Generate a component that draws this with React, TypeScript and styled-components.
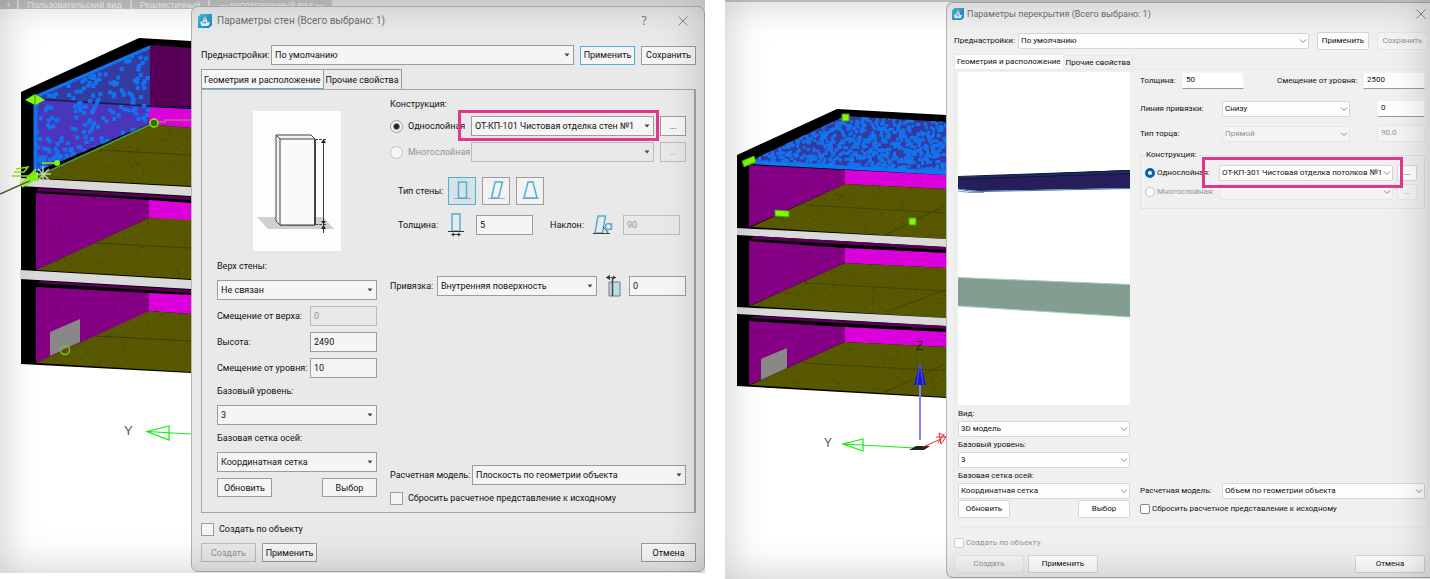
import React from 'react';
import styled, { createGlobalStyle, css, ThemeProvider } from 'styled-components';

interface Skin {
  fluent: boolean;
  surface: string;
  field: string;
  line: string;
  text: number;
  title: number;
  control: number;
}

declare module 'styled-components' {
  export interface DefaultTheme extends Skin {}
}

const classic: Skin = {
  fluent: false, surface: '#e9e9e9', field: '#f5f5f5', line: '#9c9c9c', text: 9, title: 10, control: 20,
};
const fluent: Skin = {
  fluent: true, surface: '#f0f0f0', field: '#fefefe', line: '#d6d6d6', text: 8, title: 9, control: 16,
};

const ACCENT = '#4fb0d4';
const MARK = '#e0368c';

const GlobalStyle = createGlobalStyle`
  * { box-sizing: border-box; }
  body {
    margin: 0;
    background: #fff;
    color: #111;
    font-family: Roboto, "Noto Sans", sans-serif;
  }
  button, input, select { font: inherit; color: inherit; margin: 0; }
`;

/* ---------- page ---------- */

const Page = styled.main`
  display: flex;
  align-items: flex-start;
  gap: 20px;
`;

const Pane = styled.section`
  position: relative;
  flex: 1 1 0;
  min-width: 0;
  overflow: hidden;
  background: #fff;
  &::after {
    content: '';
    position: absolute;
    inset: 0;
    pointer-events: none;
    box-shadow: inset 0 0 40px rgba(0, 0, 0, 0.22);
  }
`;

const ViewTabs = styled.nav`
  display: flex;
  gap: 2px;
  height: 9px;
  overflow: hidden;
  background: #e2e2e2;
`;

const ViewTab = styled.button`
  flex: none;
  height: 9px;
  padding: 0 8px;
  &:first-child { padding: 0 6px; }
  border: 0;
  background: #c4c4c4;
  color: #f4f4f4;
  font-family: "Liberation Sans", sans-serif;
  font-size: 9px;
  line-height: 4px;
  white-space: nowrap;
`;

const TopEdge = styled.div`
  height: 2px;
  background: #cfcfcf;
`;

const Stage = styled.div<{ $lift?: boolean }>`
  display: flex;
  align-items: flex-start;
  ${(p) => p.$lift && css`margin-top: -3px;`}
`;

const Scene = styled.svg`
  display: block;
  flex: none;
  shape-rendering: geometricPrecision;
`;

/* ---------- dialog ---------- */

const Dialog = styled.form`
  position: relative;
  flex: 1;
  min-width: 0;
  display: flex;
  flex-direction: column;
  padding: ${(p) => (p.theme.fluent ? '0 2px 4px 7px' : '0 8px 9px 9px')};
  border: 1px solid #b4b4b4;
  border-radius: 7px;
  ${(p) => p.theme.fluent && css`
    border-right: 0;
    border-radius: 7px 0 0 7px;
  `}
  background: ${(p) => p.theme.surface};
  font-size: ${(p) => p.theme.text}px;
  line-height: 14px;
`;

const TitleBar = styled.header`
  display: flex;
  align-items: center;
  gap: ${(p) => (p.theme.fluent ? 3 : 5)}px;
  height: ${(p) => (p.theme.fluent ? 22 : 27)}px;
  margin: ${(p) => (p.theme.fluent ? '0 0 7px -2px' : '0 0 11px -3px')};
  color: #6f6f6f;
`;

const Title = styled.h1`
  flex: 1;
  margin: 0;
  font-size: ${(p) => p.theme.title}px;
  font-weight: 400;
  white-space: nowrap;
`;

const TitleButton = styled.button`
  display: flex;
  align-items: center;
  justify-content: center;
  width: ${(p) => (p.theme.fluent ? 14 : 26)}px;
  height: 20px;
  margin-left: ${(p) => (p.theme.fluent ? 0 : 8)}px;
  padding: 0;
  border: 0;
  background: none;
  color: #777;
  font-family: "Noto Sans", sans-serif;
  font-size: 12px;
`;

const Row = styled.div<{ $gap?: number; $indent?: number; $between?: boolean }>`
  display: flex;
  align-items: center;
  gap: ${(p) => p.$gap ?? 6}px;
  padding-left: ${(p) => p.$indent ?? 0}px;
  ${(p) => p.$between && css`justify-content: space-between;`}
`;

const Label = styled.label<{ $w?: number }>`
  flex: none;
  display: flex;
  align-items: center;
  gap: ${(p) => (p.theme.fluent ? 2 : 5)}px;
  ${(p) => p.$w && css`width: ${p.$w}px;`}
  white-space: nowrap;
`;

const Muted = styled.span`
  color: #929292;
`;

const Push = styled.span`
  flex: 1;
`;

const box = css`
  height: ${(p) => p.theme.control}px;
  border: 1px solid ${(p) => p.theme.line};
  border-radius: ${(p) => (p.theme.fluent ? 2 : 0)}px;
  background: ${(p) => p.theme.field};
  &:disabled {
    border-color: ${(p) => (p.theme.fluent ? '#e6e6e6' : '#bcbcbc')};
    background: ${(p) => (p.theme.fluent ? '#f4f4f4' : '#e8e8e8')};
    color: #929292;
    opacity: 1;
  }
`;

const Button = styled.button<{ $w: number; $primary?: boolean }>`
  ${box}
  flex: none;
  width: ${(p) => p.$w}px;
  height: ${(p) => (p.theme.fluent ? 18 : 19)}px;
  padding: 0;
  line-height: 14px;
  white-space: nowrap;
  ${(p) => p.$primary && css`border-color: ${ACCENT};`}
`;

const MoreButton = styled(Button)`
  height: ${(p) => p.theme.control}px;
`;

const TextField = styled.input<{ $w: number }>`
  ${box}
  flex: none;
  width: ${(p) => p.$w}px;
  padding: 0 3px;
  ${(p) => p.theme.fluent && css`
    height: 17px;
    padding-bottom: 2px;
    border-color: #f2f2f2;
    border-radius: 1px;
    &:enabled { border-bottom-color: #9a9a9a; }
  `}
`;

const SelectBox = styled.span<{ $w?: number }>`
  position: relative;
  display: block;
  min-width: 0;
  flex: ${(p) => (p.$w ? `0 0 ${p.$w}px` : '1 1 auto')};
  select {
    ${box}
    display: block;
    width: 100%;
    padding: 0 ${(p) => (p.theme.fluent ? 9 : 14)}px 0 ${(p) => (p.theme.fluent ? 2 : 3)}px;
    appearance: none;
  }
  > svg {
    position: absolute;
    right: ${(p) => (p.theme.fluent ? 2 : 4)}px;
    top: 50%;
    transform: translateY(-50%);
    pointer-events: none;
  }
`;

const Marker = styled.span`
  position: absolute;
  z-index: 1;
  inset: ${(p) => (p.theme.fluent ? '-8px -10px -7px -17px' : '-6px -5px -5px -13px')};
  border: 3px solid ${MARK};
  pointer-events: none;
`;

const Check = styled.input.attrs({ type: 'checkbox' })`
  flex: none;
  appearance: none;
  width: ${(p) => (p.theme.fluent ? 10 : 13)}px;
  height: ${(p) => (p.theme.fluent ? 10 : 13)}px;
  border: 1px solid ${(p) => (p.theme.fluent ? '#858585' : '#9c9c9c')};
  border-radius: ${(p) => (p.theme.fluent ? 2 : 0)}px;
  background: ${(p) => p.theme.field};
  &:disabled { border-color: #cfcfcf; }
`;

const Radio = styled.input.attrs({ type: 'radio' })`
  flex: none;
  appearance: none;
  width: ${(p) => (p.theme.fluent ? 10 : 13)}px;
  height: ${(p) => (p.theme.fluent ? 10 : 13)}px;
  border: 1px solid #9c9c9c;
  border-radius: 50%;
  background: ${(p) => p.theme.field};
  &:disabled { border-color: #c2c2c2; }
  &:checked {
    ${(p) => p.theme.fluent
      ? css`border: 3px solid #0560b6;`
      : css`background: radial-gradient(circle, #222 0 2px, #f5f5f5 4px);`}
  }
`;

const Tabs = styled.div`
  display: flex;
  align-items: flex-end;
  margin-top: 4px;
`;

const Tab = styled.button<{ $active?: boolean }>`
  height: ${(p) => (p.theme.fluent ? 14 : 20)}px;
  padding: 0 2px;
  border: 1px solid ${(p) => (p.theme.fluent ? '#e9e9e9' : '#9c9c9c')};
  border-bottom: 0;
  background: ${(p) => p.theme.surface};
  line-height: 14px;
  & + & { border-left: 0; }
  ${(p) => p.$active && css`
    background: ${p.theme.field};
    ${p.theme.fluent ? css`height: 15px;` : css`box-shadow: inset 0 -1px ${ACCENT};`}
  `}
`;

const Panel = styled.div`
  display: flex;
  border: 1px solid ${(p) => (p.theme.fluent ? '#e9e9e9' : '#a6a6a6')};
  ${(p) => p.theme.fluent
    ? css`gap: 10px; padding: 2px 2px 9px 3px;`
    : css`gap: 13px; padding: 0 8px 0 15px; border-width: 1px 2px 1px 1px;`}
`;

const SideColumn = styled.div`
  flex: none;
  display: flex;
  flex-direction: column;
  ${(p) => p.theme.fluent
    ? css`width: 172px;`
    : css`width: 160px; gap: 6px; padding: 21px 0 15px; line-height: 15px;`}
`;

const FieldStack = styled.div`
  display: flex;
  flex-direction: column;
  padding-bottom: 1px;
`;

const MainColumn = styled.div`
  flex: 1;
  min-width: 0;
  display: flex;
  flex-direction: column;
  padding: ${(p) => (p.theme.fluent ? '0 0 2px' : '7px 0')};
`;

const Stack = styled.div<{ $top?: number; $gap?: number }>`
  display: flex;
  flex-direction: column;
  gap: ${(p) => p.$gap ?? 6}px;
  margin-top: ${(p) => p.$top ?? 0}px;
`;

const Bottom = styled(Stack)`
  margin-top: auto;
`;

const WallPreview = styled.svg`
  display: block;
  align-self: center;
  margin-bottom: 2px;
  background: #fdfdfd;
`;

const SlabPreview = styled.svg`
  display: block;
  width: 100%;
  height: 333px;
  margin-bottom: 2px;
  background: #fff;
`;

const ShapeButton = styled.button<{ $active?: boolean }>`
  display: flex;
  align-items: center;
  justify-content: center;
  width: 28px;
  height: 28px;
  padding: 0;
  border: 1px solid ${(p) => (p.$active ? ACCENT : '#9c9c9c')};
  background: ${(p) => (p.$active ? '#d6e2e8' : '#f2f2f2')};
`;

const Glyph = styled.svg`
  flex: none;
  display: block;
`;

const Group = styled.fieldset`
  display: flex;
  flex-direction: column;
  gap: 3px;
  min-width: 0;
  margin: 6px 0 0;
  padding: 3px 7px 8px 4px;
  border: 1px solid #e2e2e2;
`;

const Legend = styled.legend`
  padding: 0 1px;
  line-height: 14px;
`;

const Footer = styled.footer`
  display: flex;
  flex-direction: column;
  align-items: stretch;
  gap: ${(p) => (p.theme.fluent ? 5 : 7)}px;
  padding: ${(p) => (p.theme.fluent ? '8px 3px 0 0' : '9px 0 0')};
`;

/* ---------- drawings ---------- */

const AppIcon = ({ size }: { size: number }) => (
  <Glyph width={size} height={size} viewBox="0 0 14 14" aria-hidden="true">
    <defs>
      <linearGradient id="appicon" x1="0" y1="0" x2="1" y2="1">
        <stop offset="0" stopColor="#39c3e4" />
        <stop offset="1" stopColor="#1d7fb8" />
      </linearGradient>
    </defs>
    <path d="M3 0H14V11L11 14H0V3Z" fill="url(#appicon)" />
    <path d="M7 1.500L9.500 8H4.500Z" fill="#fff" />
    <path d="M2 8.500L4.500 7V9L7 8.500L12 8L10.500 12H3.500Z" fill="#dff3fa" />
    <path d="M7 2V10" stroke="#55788c" strokeWidth="0.700" />
  </Glyph>
);

const Cross = () => (
  <Glyph width="10" height="10" viewBox="0 0 10 10" aria-hidden="true">
    <path d="M0.500 0.500L9.500 9.500M9.500 0.500L0.500 9.500" stroke="#8a8a8a" fill="none" />
  </Glyph>
);

const Caret = ({ isFluent }: { isFluent: boolean }) =>
  isFluent ? (
    <svg width="8" height="6" viewBox="0 0 8 6" aria-hidden="true">
      <path d="M1 1.500L4 4.500L7 1.500" stroke="#8a8a8a" fill="none" />
    </svg>
  ) : (
    <svg width="6" height="4" viewBox="0 0 6 4" aria-hidden="true">
      <path d="M0.500 0.500H5.500L3 3.500Z" fill="#444" />
    </svg>
  );

function rng(seed: number) {
  let s = seed;
  return () => {
    s = (s * 16807) % 2147483647;
    return s / 2147483647;
  };
}

interface DotsProps { seed: number; n: number; x: number; y: number; w: number; h: number; size: number; fill: string; clip?: string }

const Dots = ({ seed, n, x, y, w, h, size, fill, clip }: DotsProps) => {
  const r = rng(seed);
  let d = '';
  for (let i = 0; i < n; i += 1) {
    const px = (x + r() * w).toFixed(1);
    const py = (y + r() * h).toFixed(1);
    d += `M${px} ${py}h${size}v${size}h-${size}z`;
  }
  return <path d={d} fill={fill} clipPath={clip} />;
};

const WallScene = () => (
  <Scene width="191" height="567" viewBox="0 6 191 567" role="img" aria-label="Модель здания, выбрана стена">
    <defs>
      <clipPath id="bluewall"><path d="M35 98L150 46V124L35 172Z" /></clipPath>
      <clipPath id="rooms1">
        <path d="M149 124L191 128V186L36 178ZM36 193L149 201L191 203V279L36 270ZM36 287L149 293L191 295V372L36 363Z" />
      </clipPath>
    </defs>
    <path d="M21 92L139 38L191 41V373L21 364Z" fill="#000" />
    <path d="M149 45L191 48V107L149 105Z" fill="#580058" />
    <path d="M149 107L191 109V128L149 124Z" fill="#dc00dc" />
    <path d="M149 124L191 128V186L36 178Z" fill="#585800" />
    <path d="M35 97L150 46V106L35 99Z" fill="#343ba0" />
    <path d="M35 99L149 106V124L35 172Z" fill="#4b35bb" />
    <path d="M35 99L149 106L191 108" stroke="#14204a" strokeWidth="1.500" fill="none" />
    <Dots seed={11} n={270} x={35} y={45} w={112} h={128} size={4} fill="#1273ee" clip="url(#bluewall)" />
    <Dots seed={17} n={50} x={38} y={153} w={36} h={18} size={4} fill="#1273ee" clip="url(#bluewall)" />
    <path d="M35 97L150 47" stroke="#0f74ee" strokeWidth="3" />
    <path d="M35.500 98V172" stroke="#0f74ee" strokeWidth="4" />
    <path d="M20 178L191 187V196L20 186Z" fill="#dadada" />
    <path d="M38 188L191 197V200L36 191Z" fill="#580058" />
    <path d="M36 193L149 200V218L36 270Z" fill="#850085" />
    <path d="M149 200L191 203V221L149 218Z" fill="#dc00dc" />
    <path d="M149 218L191 220V279L36 270Z" fill="#585800" />
    <path d="M20 270L191 280V289L20 279Z" fill="#dadada" />
    <path d="M42 281L191 290V293L36 283Z" fill="#580058" />
    <path d="M36 287L149 293V312L36 363Z" fill="#850085" />
    <path d="M149 293L191 295V314L149 311Z" fill="#dc00dc" />
    <path d="M149 311L191 314V372L36 363Z" fill="#585800" />
    <path d="M100 150L191 155M95 243L191 248M95 336L191 341" stroke="#3e3e08" />
    <Dots seed={5} n={700} x={36} y={124} w={155} h={250} size={1} fill="rgba(0,0,0,0.280)" clip="url(#rooms1)" />
    <path d="M50 332L80 319V342L50 356Z" fill="#888" />
    <circle cx="65" cy="350" r="4.500" fill="none" stroke="#77c520" strokeWidth="1.500" />
    <path d="M0 194L36 178" stroke="#4a6b28" strokeWidth="1.500" />
    <path d="M36 177L154 123" stroke="#4f9a3c" strokeWidth="1.500" />
    <path d="M154 122H165V120H191" stroke="#9aa850" fill="none" />
    <circle cx="154" cy="123" r="4" fill="#3a6a10" stroke="#84f010" strokeWidth="1.500" />
    <path d="M25 100L35 94L45 100L35 105Z" fill="#84f810" />
    <path d="M35 94V105" stroke="#3a8a10" />
    <path d="M16 169L28 167L24 172H14M12 176H28L36 172M20 184L30 177M22 187L34 180M36 169L30 175M42 163H56" stroke="#84f010" strokeWidth="1.500" fill="none" />
    <path d="M26 177L38 172V181H30Z" fill="#84f010" />
    <circle cx="57" cy="163" r="3" fill="#84f010" />
    <path d="M43 166V182M36 174H51M38 169L49 180M49 169L38 180" stroke="#b8d8a0" strokeWidth="1.500" />
    <text x="124" y="435" fontFamily="Liberation Sans" fontSize="13" fill="#555">Y</text>
    <path d="M147 431.500L169 426V440ZM147 431.500L191 434" stroke="#10ee10" strokeWidth="1.200" fill="none" />
  </Scene>
);

const SlabScene = () => (
  <Scene width="221" height="577" viewBox="0 2 221 577" role="img" aria-label="Модель здания, выбрано перекрытие">
    <defs>
      <clipPath id="blueslab"><path d="M25 161L120 116L221 122V172Z" /></clipPath>
      <clipPath id="rooms2">
        <path d="M24 165L120 169L221 175V239L24 227ZM24 241L120 248L221 253V318L24 306ZM24 321L120 327L221 332V397L24 386Z" />
      </clipPath>
    </defs>
    <path d="M12 155L112 109L221 115V398L12 386Z" fill="#000" />
    <path d="M25 161L120 116L221 122V172Z" fill="#343ba0" />
    <Dots seed={23} n={1050} x={24} y={114} w={197} h={58} size={3} fill="#1273ee" clip="url(#blueslab)" />
    <path d="M25 162L221 173" stroke="#0f78f0" strokeWidth="4" />
    <path d="M24 165L120 170V184L24 227Z" fill="#850085" />
    <path d="M120 170L221 175V189L120 184Z" fill="#dc00dc" />
    <path d="M120 184L221 189V239L26 227Z" fill="#585800" />
    <path d="M12 228L221 239V247L12 235Z" fill="#dadada" />
    <path d="M30 236L221 247V250L25 239Z" fill="#580058" />
    <path d="M24 241L120 248V263L24 306Z" fill="#850085" />
    <path d="M120 248L221 253V268L120 263Z" fill="#dc00dc" />
    <path d="M120 263L221 268V318L25 306Z" fill="#585800" />
    <path d="M12 307L221 318V326L12 314Z" fill="#dadada" />
    <path d="M30 316L221 326V329L25 318Z" fill="#580058" />
    <path d="M24 321L120 327V342L24 385Z" fill="#850085" />
    <path d="M120 327L221 332V347L120 342Z" fill="#dc00dc" />
    <path d="M120 342L221 347V397L25 385Z" fill="#585800" />
    <path d="M80 205L221 213M80 283L221 291M78 363L221 371M160 235L221 205M160 312L221 290M160 392L221 364" stroke="#44440a" fill="none" />
    <Dots seed={9} n={800} x={24} y={165} w={197} h={235} size={1} fill="rgba(0,0,0,0.280)" clip="url(#rooms2)" />
    <path d="M36 359L62 348V368L36 380Z" fill="#888" />
    <g fill="#80f808" stroke="#4a9a10">
      <path d="M117 114H124V121H117Z" />
      <path d="M17 161L29 156L31 162L19 167Z" />
      <path d="M50 210L64 211V217L50 216Z" />
      <path d="M184 218H191V225H184Z" />
    </g>
    <text x="191" y="350" fontFamily="Liberation Sans" fontSize="12" fill="#222">Z</text>
    <path d="M195 384V440" stroke="#8080f0" strokeWidth="2" />
    <path d="M195 363L189 385H201Z" fill="#1818c8" />
    <path d="M195 363L192 385M195 363L198 385" stroke="#5050ff" />
    <text x="99" y="447" fontFamily="Liberation Sans" fontSize="12" fill="#555">Y</text>
    <path d="M118 444L138 439V451ZM118 444L190 448" stroke="#10ee10" strokeWidth="1.200" fill="none" />
    <path d="M184 450L191 446H205L199 450Z" fill="#222" />
    <path d="M198 447L216 439M214 433L221 437L216 444ZM211 437L221 437M213 443L219 434" stroke="#f02828" fill="none" />
  </Scene>
);

const WallDrawing = () => (
  <WallPreview width="88" height="140" viewBox="0 0 88 140" role="img" aria-label="Схема стены">
    <path d="M4 106H70L81 118H15Z" fill="#cfcfcf" />
    <path d="M23 24H58L62 28V114H27L23 110Z" fill="#f2f2f2" stroke="#3c4448" />
    <path d="M27 28H62V114H27Z" fill="#fafafa" stroke="#3c4448" />
    <path d="M23 24L27 28" stroke="#3c4448" />
    <path d="M62 28V114" stroke="#3c4448" strokeWidth="2" />
    <path d="M62 28.500H73M62 113.500H73" stroke="#3c4448" strokeDasharray="3 1" />
    <path d="M70.500 29V122" stroke="#3c4448" />
    <path d="M70.500 28L73 32H68ZM70.500 113L68 110H73ZM70.500 114L73 118H68Z" fill="#222" />
  </WallPreview>
);

const SlabDrawing = () => (
  <SlabPreview viewBox="0 0 172 333" preserveAspectRatio="xMidYMid slice" role="img" aria-label="Трёхмерный вид перекрытия">
    <path d="M0 105L172 98V116L20 119L0 117Z" fill="#281e5c" />
    <path d="M0 105L172 98V102L0 107Z" fill="#1f2c66" />
    <path d="M0 104.500L172 98.500M0 107L172 101.500" stroke="#101638" fill="none" />
    <path d="M0 117Q12 120 26 119.500L172 116.500" stroke="#3d7fa8" fill="none" />
    <path d="M0 119L12 120.500H26" stroke="#6da6c4" fill="none" />
    <path d="M0 205.500L172 212.500V245L0 234Z" fill="#839d91" />
    <path d="M0 205.500L172 212.500M0 234L172 245" stroke="#a4cfb8" />
  </SlabPreview>
);

const SHAPES: Record<string, string> = {
  straight: 'M5.500 1H13.500V17H5.500Z',
  slanted: 'M8 1H15.500L11.500 17H4.500Z',
  tapered: 'M7 1H12L16 17H3Z',
};

const ShapeGlyph = ({ shape }: { shape: string }) => (
  <Glyph width="19" height="20" viewBox="0 0 19 20" aria-hidden="true">
    <path d="M1 17.500H18" stroke="#aaa" />
    <path d={SHAPES[shape]} fill="none" stroke={ACCENT} strokeWidth="1.500" />
  </Glyph>
);

const ThicknessGlyph = () => (
  <Glyph width="16" height="24" viewBox="0 0 16 24" aria-hidden="true">
    <path d="M4 1H12V18H4Z" fill="none" stroke={ACCENT} strokeWidth="1.500" />
    <path d="M0 18.500H16M4 21.500H12" stroke="#333" />
    <path d="M3 21.500L6 19.500V23.500ZM13 21.500L10 19.500V23.500Z" fill="#333" />
  </Glyph>
);

const TiltGlyph = () => (
  <Glyph width="20" height="20" viewBox="0 0 20 20" aria-hidden="true">
    <path d="M5 1H12.500L9.500 18H2Z" fill="none" stroke={ACCENT} strokeWidth="1.500" />
    <path d="M0 18.500H17M10 12Q13 14 15 18" stroke="#444" fill="none" />
    <path d="M18.500 8V15M18.500 11.500A3 3 0 1 1 18.500 11.400" fill="none" stroke={ACCENT} strokeWidth="1.500" />
  </Glyph>
);

const AlignGlyph = () => (
  <Glyph width="16" height="22" viewBox="0 0 16 22" aria-hidden="true">
    <path d="M4 7H15V21H4Z" fill="#bcdbe8" stroke="#777" />
    <path d="M7.500 3V21" stroke="#444" strokeWidth="1.500" />
    <path d="M4.500 0V5M1 2.500H11" stroke="#555" />
    <path d="M1 2.500L4 0.500V4.500ZM11 2.500L8 0.500V4.500Z" fill="#333" />
  </Glyph>
);

/* ---------- form parts ---------- */

interface SelectProps { id: string; value: string; label?: string; w?: number; disabled?: boolean; marked?: boolean; isFluent?: boolean }

const Select = ({ id, value, label, w, disabled, marked, isFluent = false }: SelectProps) => (
  <SelectBox $w={w}>
    <select id={id} disabled={disabled} aria-label={label}>
      <option>{value}</option>
    </select>
    <Caret isFluent={isFluent} />
    {marked && <Marker />}
  </SelectBox>
);

const WallDialog = () => (
  <ThemeProvider theme={classic}>
    <Dialog onSubmit={(e) => e.preventDefault()}>
      <TitleBar>
        <AppIcon size={14} />
        <Title>Параметры стен (Всего выбрано: 1)</Title>
        <TitleButton type="button" aria-label="Справка">?</TitleButton>
        <TitleButton type="button" aria-label="Закрыть"><Cross /></TitleButton>
      </TitleBar>
      <Row>
        <Label htmlFor="w-preset" $w={64}>Преднастройки:</Label>
        <Select id="w-preset" value="По умолчанию" />
        <Button type="button" $w={55} $primary>Применить</Button>
        <Button type="button" $w={55}>Сохранить</Button>
      </Row>
      <Tabs>
        <Tab type="button" $active>Геометрия и расположение</Tab>
        <Tab type="button">Прочие свойства</Tab>
      </Tabs>
      <Panel>
        <SideColumn>
          <WallDrawing />
          <Label htmlFor="w-top">Верх стены:</Label>
          <Select id="w-top" value="Не связан" />
          <Row $between>
            <Label htmlFor="w-topoff">Смещение от верха:</Label>
            <TextField id="w-topoff" $w={67} defaultValue="0" disabled />
          </Row>
          <Row $between>
            <Label htmlFor="w-height">Высота:</Label>
            <TextField id="w-height" $w={67} defaultValue="2490" />
          </Row>
          <Row $between $gap={2}>
            <Label htmlFor="w-lvloff">Смещение от уровня:</Label>
            <TextField id="w-lvloff" $w={67} defaultValue="10" />
          </Row>
          <Label htmlFor="w-level">Базовый уровень:</Label>
          <Select id="w-level" value="3" />
          <Label htmlFor="w-grid">Базовая сетка осей:</Label>
          <Select id="w-grid" value="Координатная сетка" />
          <Row $between>
            <Button type="button" $w={55}>Обновить</Button>
            <Button type="button" $w={55}>Выбор</Button>
          </Row>
        </SideColumn>
        <MainColumn>
          <span>Конструкция:</span>
          <Stack $top={5}>
            <Row>
              <Label $w={75}><Radio name="w-kind" defaultChecked />Однослойная</Label>
              <Select id="w-single" value="ОТ-КП-101 Чистовая отделка стен №1" label="Однослойная конструкция" marked />
              <MoreButton type="button" $w={26}>...</MoreButton>
            </Row>
            <Row>
              <Label $w={75}><Radio name="w-kind" disabled /><Muted>Многослойная</Muted></Label>
              <Select id="w-multi" value="" label="Многослойная конструкция" disabled />
              <MoreButton type="button" $w={26} disabled>...</MoreButton>
            </Row>
          </Stack>
          <Stack $top={15} $gap={8}>
            <Row $indent={8}>
              <Label as="span" $w={44}>Тип стены:</Label>
              <ShapeButton type="button" aria-label="Прямая" $active><ShapeGlyph shape="straight" /></ShapeButton>
              <ShapeButton type="button" aria-label="Наклонная"><ShapeGlyph shape="slanted" /></ShapeButton>
              <ShapeButton type="button" aria-label="Трапециевидная"><ShapeGlyph shape="tapered" /></ShapeButton>
            </Row>
            <Row $indent={8}>
              <Label htmlFor="w-thick" $w={44}>Толщина:</Label>
              <Row $gap={12}>
                <ThicknessGlyph />
                <TextField id="w-thick" $w={57} defaultValue="5" />
              </Row>
              <Row $gap={10} $indent={11}>
                <Label htmlFor="w-tilt" $w={33}>Наклон:</Label>
                <TiltGlyph />
                <TextField id="w-tilt" $w={57} defaultValue="90" disabled />
              </Row>
            </Row>
          </Stack>
          <Stack $top={38}>
            <Row $gap={8}>
              <Label htmlFor="w-anchor" $w={39}>Привязка:</Label>
              <Select id="w-anchor" value="Внутренняя поверхность" />
              <AlignGlyph />
              <TextField $w={57} defaultValue="0" aria-label="Смещение привязки" />
            </Row>
          </Stack>
          <Bottom>
            <Row>
              <Label htmlFor="w-model" $w={76}>Расчетная модель:</Label>
              <Select id="w-model" value="Плоскость по геометрии объекта" />
            </Row>
            <Label><Check />Сбросить расчетное представление к исходному</Label>
          </Bottom>
        </MainColumn>
      </Panel>
      <Footer>
        <Label><Check />Создать по объекту</Label>
        <Row>
          <Button type="button" $w={55} disabled>Создать</Button>
          <Button type="button" $w={55}>Применить</Button>
          <Push />
          <Button type="button" $w={55}>Отмена</Button>
        </Row>
      </Footer>
    </Dialog>
  </ThemeProvider>
);

const SlabDialog = () => (
  <ThemeProvider theme={fluent}>
    <Dialog onSubmit={(e) => e.preventDefault()}>
      <TitleBar>
        <AppIcon size={12} />
        <Title>Параметры перекрытия (Всего выбрано: 1)</Title>
        <TitleButton type="button" aria-label="Закрыть"><Cross /></TitleButton>
      </TitleBar>
      <Row $gap={8}>
        <Label htmlFor="s-preset" $w={56}>Преднастройки:</Label>
        <Select id="s-preset" value="По умолчанию" isFluent />
        <Button type="button" $w={52}>Применить</Button>
        <Button type="button" $w={51} disabled>Сохранить</Button>
      </Row>
      <Tabs>
        <Tab type="button" $active>Геометрия и расположение</Tab>
        <Tab type="button">Прочие свойства</Tab>
      </Tabs>
      <Panel>
        <SideColumn>
          <SlabDrawing />
          <FieldStack>
            <Label htmlFor="s-view">Вид:</Label>
            <Select id="s-view" value="3D модель" isFluent />
          </FieldStack>
          <FieldStack>
            <Label htmlFor="s-level">Базовый уровень:</Label>
            <Select id="s-level" value="3" isFluent />
          </FieldStack>
          <FieldStack>
            <Label htmlFor="s-grid">Базовая сетка осей:</Label>
            <Select id="s-grid" value="Координатная сетка" isFluent />
          </FieldStack>
          <Row $between>
            <Button type="button" $w={52}>Обновить</Button>
            <Button type="button" $w={52}>Выбор</Button>
          </Row>
        </SideColumn>
        <MainColumn>
          <Row>
            <Label htmlFor="s-thick" $w={36}>Толщина:</Label>
            <TextField id="s-thick" $w={62} defaultValue="50" />
            <Push />
            <Label htmlFor="s-off" $w={80}>Смещение от уровня:</Label>
            <TextField id="s-off" $w={62} defaultValue="2500" />
          </Row>
          <Stack $top={11} $gap={8}>
            <Row>
              <Label htmlFor="s-line" $w={76}>Линия привязки:</Label>
              <Select id="s-line" value="Снизу" isFluent />
              <Row $indent={21}>
                <TextField $w={48} defaultValue="0" aria-label="Смещение линии привязки" />
              </Row>
            </Row>
            <Row>
              <Label htmlFor="s-edge" $w={76}>Тип торца:</Label>
              <Select id="s-edge" value="Прямой" disabled isFluent />
              <Row $indent={21}>
                <TextField $w={48} defaultValue="90.0" disabled aria-label="Угол торца" />
              </Row>
            </Row>
          </Stack>
          <Group>
            <Legend>Конструкция:</Legend>
            <Row $gap={4}>
              <Label $w={70}><Radio name="s-kind" defaultChecked />Однослойная:</Label>
              <Select id="s-single" value="ОТ-КП-301 Чистовая отделка потолков №1" label="Однослойная конструкция" marked isFluent />
              <MoreButton type="button" $w={20}>...</MoreButton>
            </Row>
            <Row $gap={4}>
              <Label $w={70}><Radio name="s-kind" disabled /><Muted>Многослойная:</Muted></Label>
              <Select id="s-multi" value="" label="Многослойная конструкция" disabled isFluent />
              <MoreButton type="button" $w={20} disabled>...</MoreButton>
            </Row>
          </Group>
          <Bottom $gap={3}>
            <Row>
              <Label htmlFor="s-model" $w={76}>Расчетная модель:</Label>
              <Select id="s-model" value="Объем по геометрии объекта" isFluent />
            </Row>
            <Label><Check />Сбросить расчетное представление к исходному</Label>
          </Bottom>
        </MainColumn>
      </Panel>
      <Footer>
        <Label><Check disabled /><Muted>Создать по объекту</Muted></Label>
        <Row $gap={4}>
          <Button type="button" $w={70} disabled>Создать</Button>
          <Button type="button" $w={70}>Применить</Button>
          <Push />
          <Button type="button" $w={70}>Отмена</Button>
        </Row>
      </Footer>
    </Dialog>
  </ThemeProvider>
);

export default function App() {
  return (
    <>
      <GlobalStyle />
      <Page>
        <Pane>
          <ViewTabs aria-label="Вид">
            <ViewTab type="button">+</ViewTab>
            <ViewTab type="button">Пользовательский вид</ViewTab>
            <ViewTab type="button">Реалистичный</ViewTab>
            <ViewTab type="button">--- несохраненный вид ---</ViewTab>
          </ViewTabs>
          <Stage $lift>
            <WallScene />
            <WallDialog />
          </Stage>
        </Pane>
        <Pane>
          <TopEdge />
          <Stage>
            <SlabScene />
            <SlabDialog />
          </Stage>
        </Pane>
      </Page>
    </>
  );
}
